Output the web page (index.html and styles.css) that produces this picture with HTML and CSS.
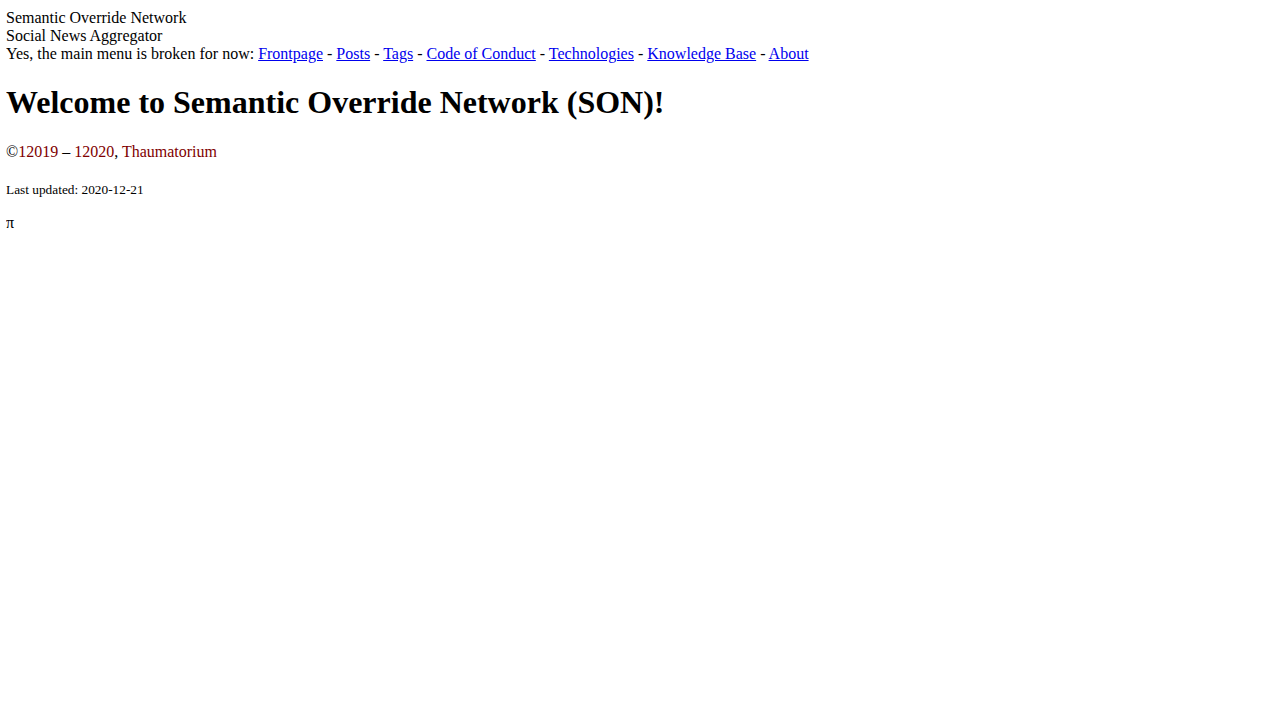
FILE: index.html
```html
<!DOCTYPE html>
<html lang="en">
<head>
<meta charset="utf-8">
<title>Semantic Override Network</title>
<link rel="stylesheet" href="styles.css">
</head>
<body>
<header class="site-header">
<div class="site-name">Semantic Override Network</div>
<div class="site-tagline">Social News Aggregator</div>
<nav class="main-menu">Yes, the main menu is broken for now: <a href="#">Frontpage</a> - <a href="#">Posts</a> - <a href="#">Tags</a> - <a href="#">Code of Conduct</a> - <a href="#">Technologies</a> - <a href="#">Knowledge Base</a> - <a href="#">About</a></nav>
</header>
<main>
<h1 class="title">Welcome to Semantic Override Network (SON)!</h1>
</main>
<footer class="site-footer">
<p class="copyright">©<time class="year">12019</time> – <time class="year">12020</time>, <span class="owner">Thaumatorium</span></p>
<p class="updated"><small>Last updated: 2020-12-21</small></p>
<p class="pi">π</p>
</footer>
</body>
</html>
```
FILE: styles.css
```css
body {
  margin: 9px 6px 6px;
  font-family: "Liberation Serif", "Times New Roman", serif;
  font-size: 16px;
  color: #000;
  background: #fff;
}
.main-menu a {
  color: #0000ee;
}
.title {
  font-size: 2em;
  margin: 0.67em 0;
}
.year,
.owner {
  color: #800000;
}
.updated {
  margin-top: 19px;
}
```
